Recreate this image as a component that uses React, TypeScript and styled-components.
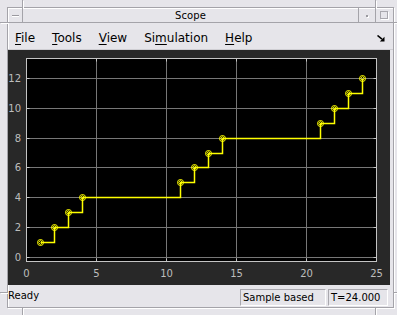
import React from "react";
import styled, { createGlobalStyle } from "styled-components";

const FRAME = "#e6e5ea";
const LINE = "#a4a3a9";
const HI = "#ffffff";

const Global = createGlobalStyle`
  html, body { margin: 0; padding: 0; background: ${FRAME}; }
  body { font-family: "DejaVu Sans", "Liberation Sans", sans-serif; color: #000; }
`;

const Window = styled.div`
  position: relative;
  width: 397px;
  height: 315px;
  box-sizing: border-box;
  padding: 7px 3px 7px 7px;
  background: ${FRAME};
  overflow: hidden;
`;

const Mark = styled.div<{ $x: number; $y: number; $w: number; $h: number }>`
  position: absolute;
  left: ${(p) => p.$x}px;
  top: ${(p) => p.$y}px;
  width: ${(p) => p.$w}px;
  height: ${(p) => p.$h}px;
  background: ${LINE};
  box-shadow: 1px 1px 0 ${HI};
`;

const Inner = styled.div`
  height: 100%;
  box-sizing: border-box;
  border: 1px solid ${LINE};
  box-shadow: inset 1px 1px 0 ${HI}, 1px 1px 0 ${HI};
  display: flex;
  flex-direction: column;
`;

const TitleBar = styled.div`
  display: flex;
  height: 15px;
  box-sizing: border-box;
  border-bottom: 1px solid ${LINE};
  flex-shrink: 0;
`;

const TitleButton = styled.div<{ $w: number; $side: "left" | "right" }>`
  width: ${(p) => p.$w}px;
  box-sizing: border-box;
  ${(p) => (p.$side === "left" ? `border-right: 1px solid ${LINE};` : `border-left: 1px solid ${LINE};`)}
  display: flex;
  align-items: center;
  justify-content: center;
`;

const Dash = styled.span`
  width: 7px;
  height: 1px;
  background: #9a999f;
  box-shadow: 0 1px 0 ${HI};
  margin-top: 1px;
`;

const Dot = styled.span`
  width: 2px;
  height: 2px;
  background: #9a999f;
  box-shadow: 1px 1px 0 ${HI};
  margin-top: 2px;
  margin-left: -1px;
`;

const Square = styled.span`
  width: 6px;
  height: 6px;
  border: 1px solid #a9a8ae;
  box-shadow: 1px 1px 0 ${HI};
  margin-left: -2px;
`;

const Title = styled.div`
  flex: 1;
  text-align: center;
  font-size: 10px;
  line-height: 15px;
  letter-spacing: 0.1px;
`;

const MenuBar = styled.div`
  display: flex;
  align-items: center;
  gap: 17px;
  height: 27px;
  box-sizing: border-box;
  padding: 3px 8px 0 7px;
  border-bottom: 1px solid #cfced3;
  font-size: 12px;
  flex-shrink: 0;
`;

const MenuItem = styled.span`
  white-space: nowrap;
  u { text-underline-offset: 2px; }
`;

const MenuArrow = styled.svg`
  margin-left: auto;
  margin-top: 1px;
`;

const PlotPanel = styled.div`
  height: 235px;
  margin-right: 3px;
  background: #282828;
  flex-shrink: 0;
  svg { display: block; }
`;

const StatusBar = styled.div`
  flex: 1;
  display: flex;
  align-items: flex-end;
  gap: 2px;
  padding: 0 5px 1px 0;
  font-size: 10px;
`;

const Ready = styled.div`
  flex: 1;
  align-self: center;
  margin-top: -1px;
`;

const StatusBox = styled.div<{ $w: number }>`
  width: ${(p) => p.$w}px;
  height: 17px;
  box-sizing: border-box;
  border-top: 1px solid #a9a8ae;
  border-left: 1px solid #a9a8ae;
  border-right: 1px solid ${HI};
  border-bottom: 1px solid ${HI};
  padding-left: 2px;
  line-height: 15px;
  white-space: nowrap;
`;

const px = (x: number) => 26.5 + 14 * x;
const py = (y: number) => Math.round(257 - 14.92 * y) + 0.5;

const points: [number, number][] = [
  [1, 1], [2, 2], [3, 3], [4, 4],
  [11, 5], [12, 6], [13, 7], [14, 8],
  [21, 9], [22, 10], [23, 11], [24, 12],
];

const Chart: React.FC = () => {
  const left = 26.5, right = 376.5, top = 58.5, bottom = 261.5;
  let d = `M${px(points[0][0])} ${py(points[0][1])}`;
  for (let i = 1; i < points.length; i++) {
    d += ` H${px(points[i][0])} V${py(points[i][1])}`;
  }
  const yTicks = [0, 2, 4, 6, 8, 10, 12];
  const xTicks = [0, 5, 10, 15, 20, 25];
  return (
    <svg width={382} height={235} viewBox="8 50 382 235">
      <rect x={left} y={top} width={right - left} height={bottom - top} fill="#000" />
      {xTicks.slice(1, -1).map((t) => (
        <line key={"gx" + t} x1={px(t)} x2={px(t)} y1={top} y2={bottom} stroke="#777" strokeWidth={1} />
      ))}
      {yTicks.map((t) => (
        <line key={"gy" + t} x1={left} x2={right} y1={py(t)} y2={py(t)} stroke="#777" strokeWidth={1} />
      ))}
      {yTicks.map((t) => (
        <g key={"ty" + t}>
          <line x1={left} x2={left + 3} y1={py(t)} y2={py(t)} stroke="#c4c4c4" />
          <line x1={right - 3} x2={right} y1={py(t)} y2={py(t)} stroke="#c4c4c4" />
        </g>
      ))}
      {xTicks.map((t) => (
        <g key={"tx" + t}>
          <line x1={px(t)} x2={px(t)} y1={bottom - 3} y2={bottom} stroke="#c4c4c4" />
          <line x1={px(t)} x2={px(t)} y1={top} y2={top + 3} stroke="#c4c4c4" />
        </g>
      ))}
      <rect x={left} y={top} width={right - left} height={bottom - top} fill="none" stroke="#c4c4c4" strokeWidth={1} />
      <path d={d} fill="none" stroke="#ffff00" strokeWidth={1.5} />
      {points.map(([x, y]) => {
        const cx = px(x), cy = py(y);
        return (
          <g key={x} stroke="#ffff00" fill="none">
            <circle cx={cx} cy={cy} r={3} strokeWidth={1} />
            <path d={`M${cx} ${cy - 2} L${cx + 2} ${cy} L${cx} ${cy + 2} L${cx - 2} ${cy} Z`} strokeWidth={0.9} />
          </g>
        );
      })}
      <g fill="#bdbdbd" fontSize={10} fontFamily="DejaVu Sans, sans-serif">
        {yTicks.map((t) => (
          <text key={"ly" + t} x={21} y={py(t) + 3.6} textAnchor="end">{t}</text>
        ))}
        {xTicks.map((t) => (
          <text key={"lx" + t} x={px(t)} y={277} textAnchor="middle">{t}</text>
        ))}
      </g>
    </svg>
  );
};

const App: React.FC = () => (
  <>
    <Global />
    <Window>
      <Mark $x={22} $y={0} $w={1} $h={7} />
      <Mark $x={375} $y={0} $w={1} $h={7} />
      <Mark $x={22} $y={308} $w={1} $h={7} />
      <Mark $x={375} $y={308} $w={1} $h={7} />
      <Mark $x={0} $y={22} $w={7} $h={1} />
      <Mark $x={0} $y={292} $w={7} $h={1} />
      <Mark $x={394} $y={22} $w={3} $h={1} />
      <Mark $x={394} $y={292} $w={3} $h={1} />
      <Inner>
        <TitleBar>
          <TitleButton $w={15} $side="left"><Dash /></TitleButton>
          <Title>Scope</Title>
          <TitleButton $w={17} $side="right"><Dot /></TitleButton>
          <TitleButton $w={18} $side="right"><Square /></TitleButton>
        </TitleBar>
        <MenuBar>
          <MenuItem><u>F</u>ile</MenuItem>
          <MenuItem><u>T</u>ools</MenuItem>
          <MenuItem><u>V</u>iew</MenuItem>
          <MenuItem>Si<u>m</u>ulation</MenuItem>
          <MenuItem><u>H</u>elp</MenuItem>
          <MenuArrow width={8} height={7} viewBox="0 0 8 7">
            <path d="M0.5 0.5 L5 4.2" stroke="#000" strokeWidth={1.6} />
            <path d="M7.5 6.5 L7.5 1.8 L2.8 6.5 Z" fill="#000" />
          </MenuArrow>
        </MenuBar>
        <PlotPanel>
          <Chart />
        </PlotPanel>
        <StatusBar>
          <Ready>Ready</Ready>
          <StatusBox $w={86}>Sample based</StatusBox>
          <StatusBox $w={60}>T=24.000</StatusBox>
        </StatusBar>
      </Inner>
    </Window>
  </>
);

export default App;
